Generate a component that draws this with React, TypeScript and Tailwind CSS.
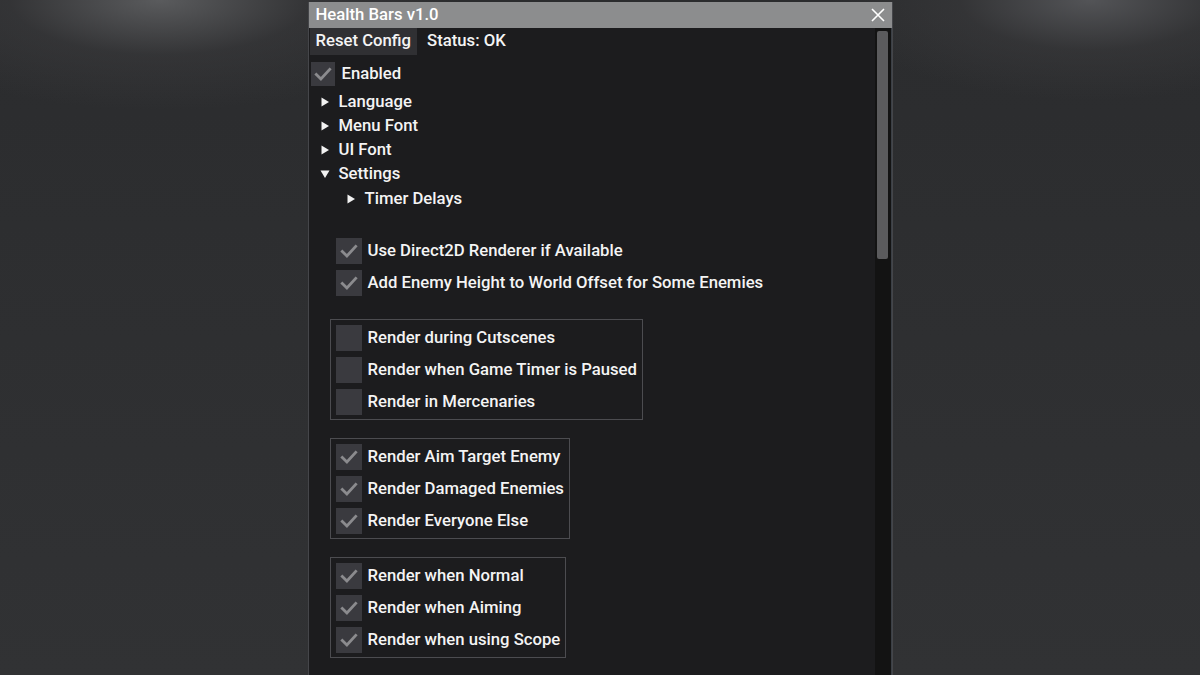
import React from "react";

function Check() {
  return (
    <svg viewBox="0 0 24 24" className="w-[20px] h-[20px]">
      <path d="M4 12.5 L9.5 18 L20 6.5" fill="none" stroke="#8b8b8e" strokeWidth="3.4" strokeLinecap="square" />
    </svg>
  );
}

function Box({ checked, size = 26 }: { checked: boolean; size?: number }) {
  return (
    <div
      className={
        (size === 24 ? "w-[24px] h-[24px]" : "w-[26px] h-[26px]") +
        " bg-[#3a3a3f] flex items-center justify-center shrink-0"
      }
    >
      {checked ? <Check /> : null}
    </div>
  );
}

function CheckRow({ label, checked }: { label: string; checked: boolean }) {
  return (
    <div className="flex items-center h-[26px]">
      <Box checked={checked} />
      <span className="ml-[6px] whitespace-nowrap">{label}</span>
    </div>
  );
}

function Arrow({ open }: { open?: boolean }) {
  return open ? (
    <svg viewBox="0 0 10 10" className="w-[10px] h-[10px]">
      <path d="M0.5 1.5 L9.5 1.5 L5 9 Z" fill="#f2f2f2" />
    </svg>
  ) : (
    <svg viewBox="0 0 10 10" className="w-[10px] h-[10px]">
      <path d="M1.5 0.5 L9 5 L1.5 9.5 Z" fill="#f2f2f2" />
    </svg>
  );
}

function TreeRow({ label, open, indent }: { label: string; open?: boolean; indent?: boolean }) {
  return (
    <div className={"flex items-center h-[24px] " + (indent ? "pl-[36px]" : "pl-[10px]")}>
      <Arrow open={open} />
      <span className="ml-[9px]">{label}</span>
    </div>
  );
}

function Group({ items }: { items: [string, boolean][] }) {
  return (
    <div className="ml-[20px] w-fit border border-[#4c4c50] pl-[5px] pr-[5px] pt-[5px] pb-[4px] flex flex-col gap-[6px]">
      {items.map(([l, c]) => (
        <CheckRow key={l} label={l} checked={c} />
      ))}
    </div>
  );
}

export default function App() {
  return (
    <div
      className="w-[1200px] h-[675px] overflow-hidden pt-[2px] bg-[#2e2f31] bg-[radial-gradient(ellipse_300px_110px_at_160px_0px,#5a5b5d_0%,rgba(60,60,62,0.5)_50%,rgba(46,47,49,0)_100%),radial-gradient(ellipse_260px_100px_at_1090px_0px,#535457_0%,rgba(60,60,62,0.5)_50%,rgba(46,47,49,0)_100%),linear-gradient(180deg,#2b2c2e_0%,#313234_100%)]"
      style={{ fontFamily: "Roboto, 'Noto Sans', sans-serif" }}
    >
      <div className="mx-auto w-[585px] h-[700px] bg-[#1c1c1e] border-l border-r border-[#45464a] flex flex-col text-[16.7px] font-medium text-[#f4f4f4] leading-none">
        <div className="h-[26px] bg-[#8c8d8e] flex items-center justify-between pl-[7px] pr-[7px] shrink-0">
          <span className="text-white">Health Bars v1.0</span>
          <svg viewBox="0 0 14 14" className="w-[14px] h-[14px]">
            <path d="M1 1 L13 13 M13 1 L1 13" stroke="#ffffff" strokeWidth="1.6" />
          </svg>
        </div>
        <div className="flex flex-1 min-h-0">
          <div className="flex-1 pl-[1px] flex flex-col">
            <div className="flex items-center h-[27px]">
              <div className="h-full bg-[#303033] px-[6px] flex items-center">Reset Config</div>
              <span className="ml-[10px]">Status: OK</span>
            </div>
            <div className="flex items-center h-[24px] mt-[7px] pl-[1px]">
              <Box checked size={24} />
              <span className="ml-[7px]">Enabled</span>
            </div>
            <div className="mt-[4px] flex flex-col">
              <TreeRow label="Language" />
              <TreeRow label="Menu Font" />
              <TreeRow label="UI Font" />
              <TreeRow label="Settings" open />
              <div className="h-[1px]" />
              <TreeRow label="Timer Delays" indent />
            </div>
            <div className="mt-[27px] pl-[26px] flex flex-col gap-[6px]">
              <CheckRow label="Use Direct2D Renderer if Available" checked />
              <CheckRow label="Add Enemy Height to World Offset for Some Enemies" checked />
            </div>
            <div className="mt-[23px]">
              <Group
                items={[
                  ["Render during Cutscenes", false],
                  ["Render when Game Timer is Paused", false],
                  ["Render in Mercenaries", false],
                ]}
              />
            </div>
            <div className="mt-[18px]">
              <Group
                items={[
                  ["Render Aim Target Enemy", true],
                  ["Render Damaged Enemies", true],
                  ["Render Everyone Else", true],
                ]}
              />
            </div>
            <div className="mt-[18px]">
              <Group
                items={[
                  ["Render when Normal", true],
                  ["Render when Aiming", true],
                  ["Render when using Scope", true],
                ]}
              />
            </div>
          </div>
          <div className="w-[17px] bg-[#131313] pt-[3px] flex justify-center border-r border-[#3a3f45]">
            <div className="w-[11px] h-[228px] bg-[#5b5b5d] rounded-[2px]" />
          </div>
        </div>
      </div>
    </div>
  );
}
